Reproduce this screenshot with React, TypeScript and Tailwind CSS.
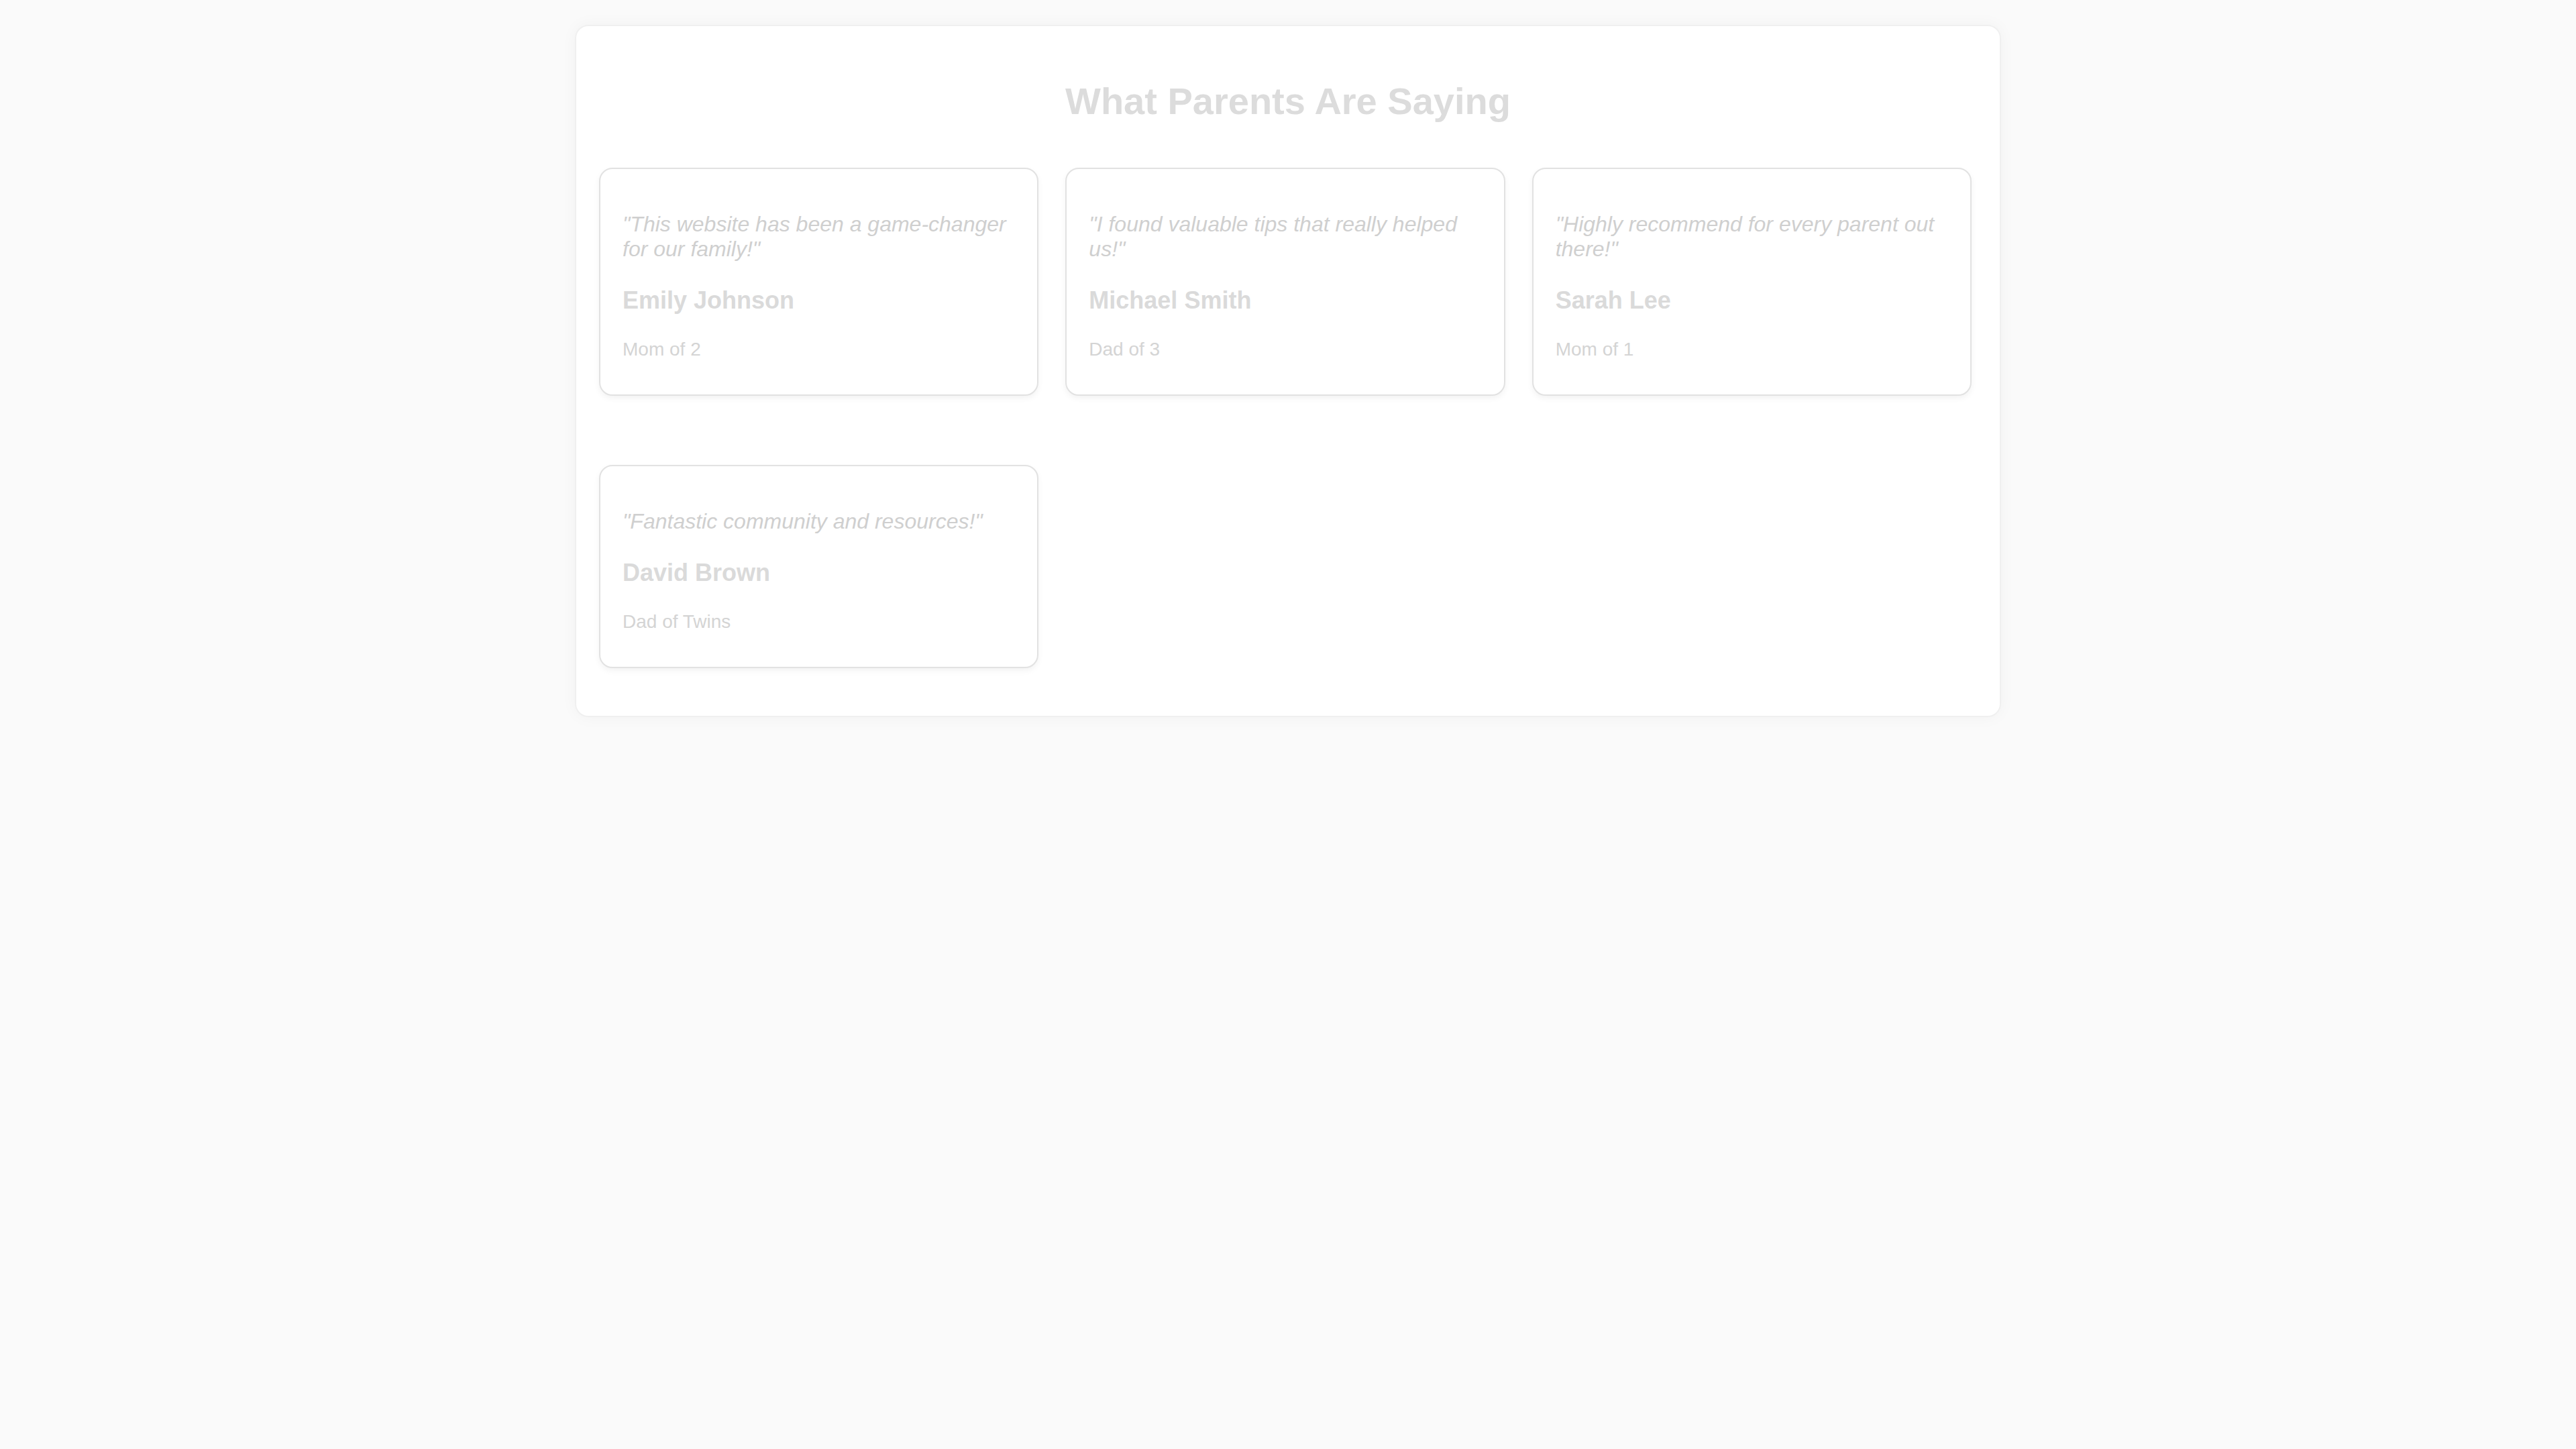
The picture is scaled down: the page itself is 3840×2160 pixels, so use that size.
import React from 'react';

type Testimonial = {
  quote: string;
  name: string;
  role: string;
};

const testimonials: Testimonial[] = [
  { quote: '"This website has been a game-changer for our family!"', name: 'Emily Johnson', role: 'Mom of 2' },
  { quote: '"I found valuable tips that really helped us!"', name: 'Michael Smith', role: 'Dad of 3' },
  { quote: '"Highly recommend for every parent out there!"', name: 'Sarah Lee', role: 'Mom of 1' },
  { quote: '"Fantastic community and resources!"', name: 'David Brown', role: 'Dad of Twins' },
];

const TestimonialCard: React.FC<{ item: Testimonial }> = ({ item }) => (
  <div className="bg-white border-2 border-[#e2e2e2] rounded-[20px] shadow-[0_4px_10px_rgba(0,0,0,0.05)] pl-[33px] pr-[30px] pt-[64px] pb-[49px] flex flex-col">
    <p className="text-[32px] leading-[37px] italic text-[#cfcfcf]">{item.quote}</p>
    <h3 className="mt-[36px] text-[36px] leading-[44px] font-bold text-[#dadada]">{item.name}</h3>
    <p className="mt-[33px] text-[28px] leading-[36px] text-[#d4d4d4]">{item.role}</p>
  </div>
);

const App: React.FC = () => {
  return (
    <div className="min-h-screen w-full bg-[#fafafa] pt-[37px] font-['Liberation_Sans',Arial,sans-serif]">
      <section className="mx-auto w-[2126px] bg-white rounded-[20px] border-2 border-[#f0f0f0] shadow-[0_0_24px_rgba(0,0,0,0.04)] px-[31px] pt-[78px] pb-[71px]">
        <h2 className="text-center text-[56px] leading-[67px] font-bold text-[#dcdcdc]">
          What Parents Are Saying
        </h2>

        <div className="mt-[66px] pl-[3px] pr-[11px] grid grid-cols-3 gap-x-[40px] gap-y-[103px]">
          {testimonials.map((t, idx) => (
            <TestimonialCard key={idx} item={t} />
          ))}
        </div>
      </section>
    </div>
  );
};

export default App;
